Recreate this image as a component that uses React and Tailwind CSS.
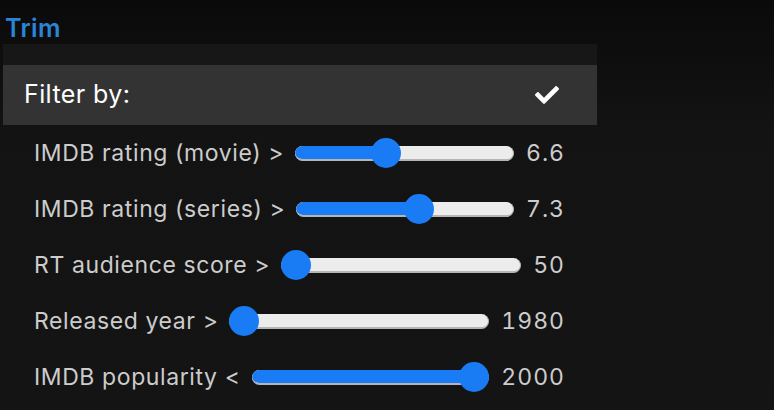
import React from "react";
import { FaCheck } from "react-icons/fa";

const rows = [
  { label: "IMDB rating (movie) >", value: "6.6", p: 0.4 },
  { label: "IMDB rating (series) >", value: "7.3", p: 0.575 },
  { label: "RT audience score >", value: "50", p: 0 },
  { label: "Released year >", value: "1980", p: 0 },
  { label: "IMDB popularity <", value: "2000", p: 1 },
];

function Slider({ p }) {
  return (
    <div className="relative flex-1 h-[30px] flex items-center">
      <div className="w-full h-[15px] rounded-full bg-[#ececec] border-b-2 border-r border-[#b5b5b5] overflow-hidden relative">
        <div
          className="absolute left-0 top-0 bottom-0 bg-[#1a7cf5] rounded-full"
          style={{ width: `calc(${p} * (100% - 30px) + 15px)` }}
        />
      </div>
      <div
        className="absolute top-0 w-[30px] h-[30px] rounded-full bg-[#1a7cf5]"
        style={{ left: `calc(${p} * (100% - 30px))` }}
      />
    </div>
  );
}

export default function App() {
  return (
    <div
      className="w-[774px] h-[410px] overflow-hidden bg-[linear-gradient(to_bottom,#0a0a0a_0px,#131313_130px,#141414_410px)]"
      style={{ fontFamily: "Inter, 'Noto Sans', sans-serif" }}
    >
      <div className="pl-[5px] pt-[13px] h-[44px] text-[25px] leading-[30px] font-semibold tracking-[0.4px] text-[#2a85d8]">
        Trim
      </div>
      <div className="ml-[3px] w-[594px]">
        <div className="h-[21px] bg-[#171717]" />
        <div className="h-[60px] bg-[#333333] flex items-center justify-between pl-[21px] pr-[35px]">
          <span className="text-[25px] tracking-[0.4px] text-white">Filter by:</span>
          <FaCheck className="text-white w-[30px] h-[24px]" />
        </div>
        <div>
          {rows.map((r) => (
            <div key={r.label} className="h-[56px] flex items-center pl-[31px] pr-[32px]">
              <span className="text-[23px] tracking-[0.6px] text-[#cccccc] whitespace-nowrap mr-[11px]">{r.label}</span>
              <Slider p={r.p} />
              <span className="text-[23px] tabular-nums tracking-[1px] text-[#cccccc] ml-[12px]">{r.value}</span>
            </div>
          ))}
        </div>
      </div>
    </div>
  );
}
